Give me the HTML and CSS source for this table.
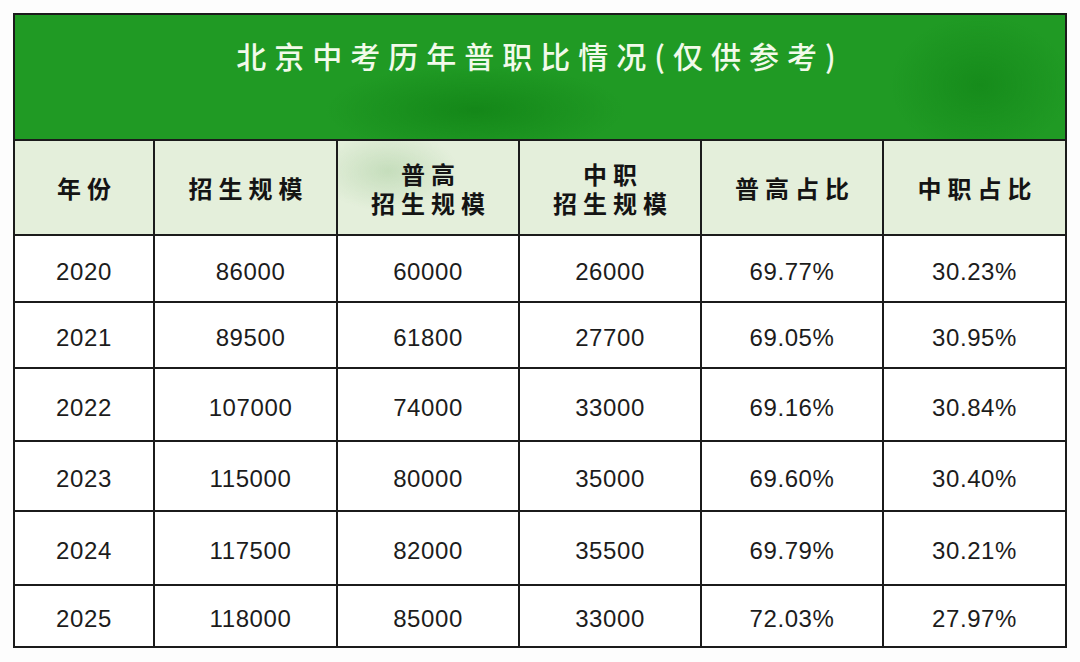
FILE: index.html
```html
<!DOCTYPE html>
<html lang="zh-CN">
<head>
<meta charset="utf-8">
<title>北京中考历年普职比情况</title>
<link rel="stylesheet" href="styles.css">
</head>
<body>
<table class="sheet">
  <colgroup>
    <col class="c1"><col class="c2"><col class="c3"><col class="c4"><col class="c5"><col class="c6">
  </colgroup>
  <thead>
    <tr class="title-row"><th colspan="6" class="title">北京中考历年普职比情况(仅供参考)</th></tr>
    <tr class="head-row">
      <th>年份</th>
      <th>招生规模</th>
      <th class="wm"><span class="hl">普高</span><span class="hl">招生规模</span></th>
      <th><span class="hl">中职</span><span class="hl">招生规模</span></th>
      <th>普高占比</th>
      <th>中职占比</th>
    </tr>
  </thead>
  <tbody>
    <tr class="r1"><td>2020</td><td class="shift">86000</td><td>60000</td><td>26000</td><td>69.77%</td><td>30.23%</td></tr>
    <tr class="r2"><td>2021</td><td class="shift">89500</td><td>61800</td><td>27700</td><td>69.05%</td><td>30.95%</td></tr>
    <tr class="r3"><td>2022</td><td class="shift">107000</td><td>74000</td><td>33000</td><td>69.16%</td><td>30.84%</td></tr>
    <tr class="r4"><td>2023</td><td class="shift">115000</td><td>80000</td><td>35000</td><td>69.60%</td><td>30.40%</td></tr>
    <tr class="r5"><td>2024</td><td class="shift">117500</td><td>82000</td><td>35500</td><td>69.79%</td><td>30.21%</td></tr>
    <tr class="r6"><td>2025</td><td class="shift">118000</td><td>85000</td><td>33000</td><td>72.03%</td><td>27.97%</td></tr>
  </tbody>
</table>
</body>
</html>
```
FILE: styles.css
```css
html, body {
  margin: 0;
  background: #fdfdfd;
}
body {
  padding: 13px 0 0 13px;
  font-family: "Noto Sans CJK SC", "Noto Sans", sans-serif;
}
.sheet {
  width: 1054px;
  table-layout: fixed;
  border-collapse: collapse;
  border: 2px solid #1b1b1b;
}
.c1 { width: 140px; }
.c2 { width: 183px; }
.c3 { width: 182px; }
.c4 { width: 182px; }
.c5 { width: 182px; }
.c6 { width: 183px; }

.sheet th, .sheet td {
  border: 2px solid #1b1b1b;
  padding: 0;
  text-align: center;
}
.title-row { height: 126px; }
.sheet .title {
  vertical-align: top;
  padding-top: 21px;
  font-size: 30px;
  line-height: 38px;
  font-weight: 500;
  letter-spacing: 8px;
  color: #f2faea;
  background:
    radial-gradient(ellipse 150px 45px at 460px 95px, rgba(10, 120, 15, 0.55), rgba(10, 120, 15, 0) 100%),
    radial-gradient(ellipse 90px 70px at 965px 70px, rgba(12, 125, 18, 0.5), rgba(12, 125, 18, 0) 100%),
    #209a24;
}
.head-row { height: 95px; }
.sheet .head-row th {
  background: #e4efdb;
  color: #141414;
  font-size: 24px;
  line-height: 30px;
  font-weight: 700;
  letter-spacing: 6px;
  padding-left: 6px;
}
.hl {
  display: block;
  line-height: 29px;
}
.sheet .head-row th.wm {
  background:
    radial-gradient(ellipse 70px 40px at 50px 30px, rgba(160, 200, 150, 0.45), rgba(160, 200, 150, 0) 100%),
    #e4efdb;
}
.sheet tbody td {
  font-family: "Liberation Sans", Arial, sans-serif;
  font-size: 24px;
  color: #1c1c1c;
  background: #ffffff;
  padding-top: 6px;
  letter-spacing: 0.6px;
}
.sheet tbody td.shift { padding-left: 10px; }
.r1 { height: 67px; }
.r2 { height: 66px; }
.r3 { height: 73px; }
.r4 { height: 70px; }
.r5 { height: 74px; }
.r6 { height: 62px; }
```
